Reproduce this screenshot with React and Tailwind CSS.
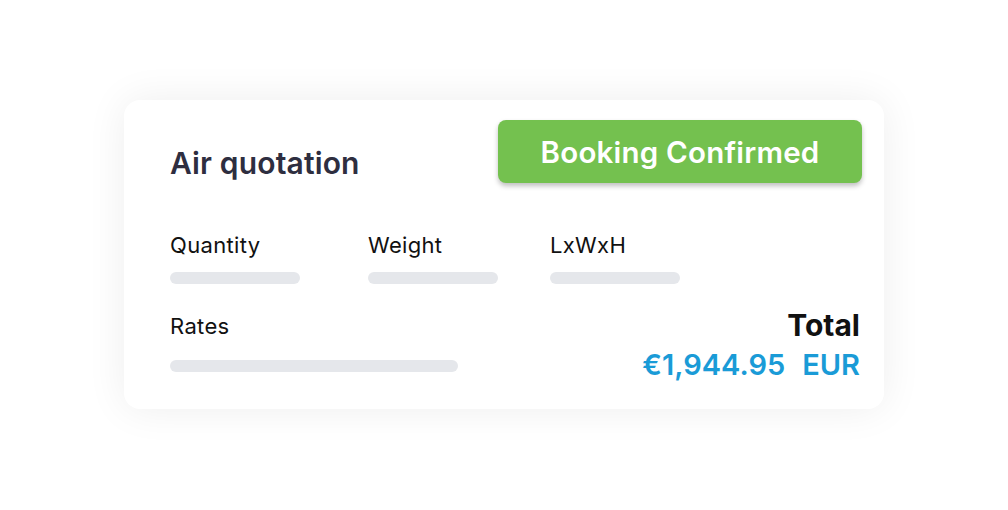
export default function App() {
  return (
    <div className="w-[1008px] h-[510px] bg-white pt-[100px] pl-[124px]" style={{ fontFamily: "Inter, 'Noto Sans', sans-serif" }}>
      <div className="w-[760px] h-[309px] bg-white rounded-[16px] shadow-[0_0_40px_rgba(0,0,0,0.07)] pt-[20px] pl-[46px] pr-[22px]">
        <div className="flex justify-between items-start">
          <div className="mt-[25px] text-[30px] leading-[36px] font-semibold tracking-[0.005em] text-[#2e2e40]">Air quotation</div>
          <div className="w-[364px] h-[63px] rounded-[8px] bg-[#74c14f] shadow-[0_3px_5px_rgba(0,0,0,0.25)] flex items-center justify-center text-white text-[29.5px] leading-[36px] font-semibold tracking-[0.007em]">
            Booking Confirmed
          </div>
        </div>
        <div className="flex mt-[49px]">
          <div className="w-[198px]">
            <div className="text-[22px] leading-[26px] tracking-[0.015em] text-[#111]">Quantity</div>
            <div className="mt-[14px] w-[130px] h-[12px] rounded-full bg-[#e5e7eb]" />
          </div>
          <div className="w-[182px]">
            <div className="text-[22px] leading-[26px] tracking-[0.015em] text-[#111]">Weight</div>
            <div className="mt-[14px] w-[130px] h-[12px] rounded-full bg-[#e5e7eb]" />
          </div>
          <div className="w-[130px]">
            <div className="text-[22px] leading-[26px] tracking-[0.015em] text-[#111]">LxWxH</div>
            <div className="mt-[14px] w-[130px] h-[12px] rounded-full bg-[#e5e7eb]" />
          </div>
        </div>
        <div className="flex justify-between items-start mt-[23px] pr-[2px]">
          <div className="pt-[6px]">
            <div className="text-[22px] leading-[26px] tracking-[0.015em] text-[#111]">Rates</div>
            <div className="mt-[21px] w-[288px] h-[12px] rounded-full bg-[#e5e7eb]" />
          </div>
          <div className="flex flex-col items-end">
            <div className="text-[30px] leading-[36px] font-bold text-[#111]">Total</div>
            <div className="mt-[4px] flex gap-[17px] text-[29px] leading-[36px] font-semibold text-[#1a9bd7]">
              <span>€1,944.95</span>
              <span>EUR</span>
            </div>
          </div>
        </div>
      </div>
    </div>
  );
}
